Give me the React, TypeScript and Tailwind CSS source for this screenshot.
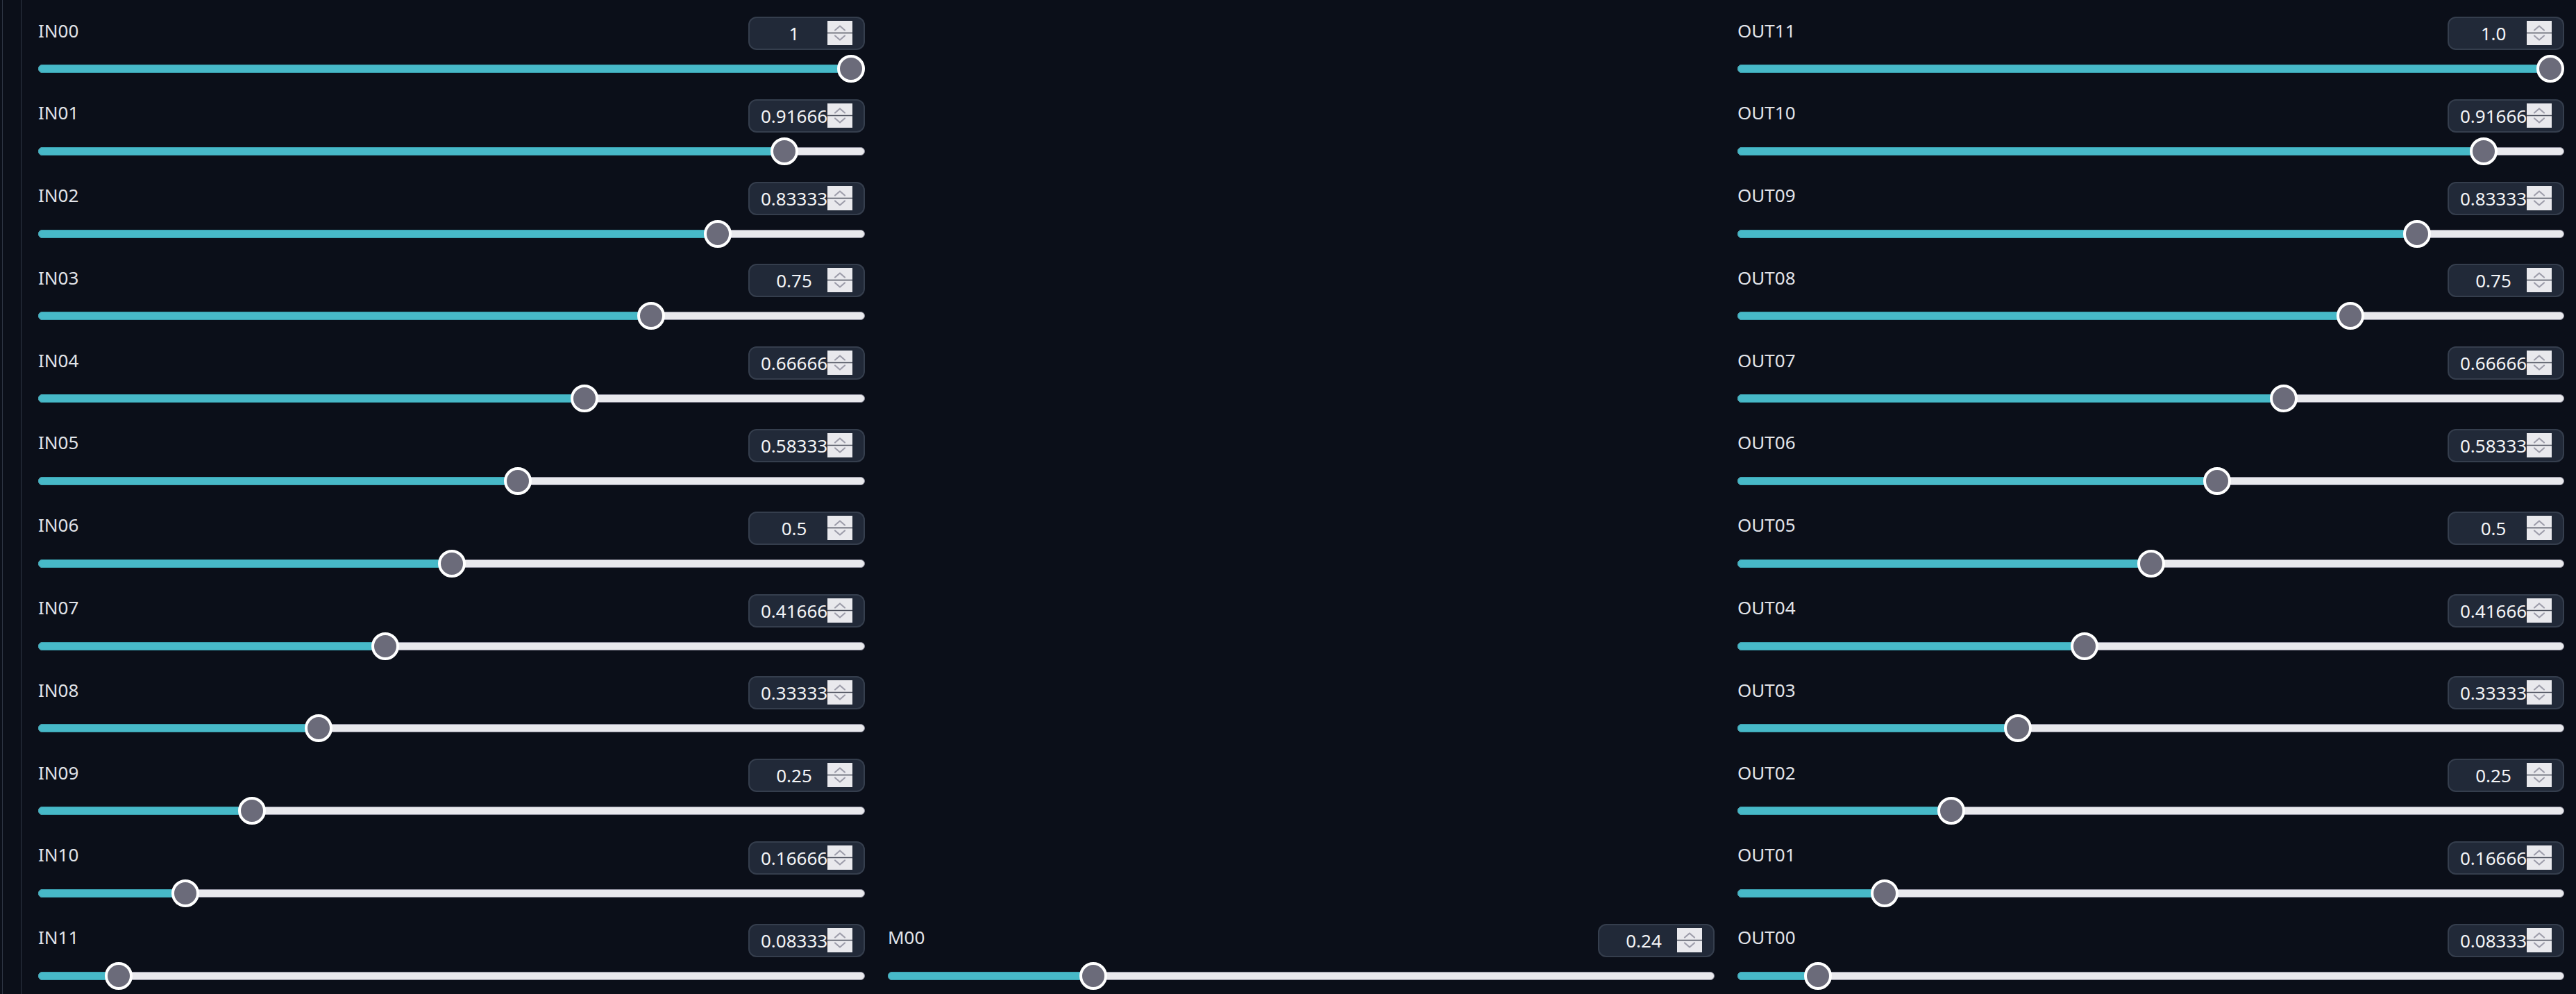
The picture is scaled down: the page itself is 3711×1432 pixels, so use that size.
import React from "react";

type Item = { label: string; value: number; text: string };

const frac = (n: number) => n / 12;

const inItems: Item[] = Array.from({ length: 12 }, (_, i) => {
  const v = frac(12 - i);
  const texts: Record<number, string> = {
    0: "1",
    1: "0.9166666666666666",
    2: "0.8333333333333334",
    3: "0.75",
    4: "0.6666666666666666",
    5: "0.5833333333333334",
    6: "0.5",
    7: "0.4166666666666667",
    8: "0.3333333333333333",
    9: "0.25",
    10: "0.16666666666666666",
    11: "0.08333333333333333",
  };
  return { label: `IN${String(i).padStart(2, "0")}`, value: v, text: texts[i] };
});

const outItems: Item[] = inItems.map((it, i) => ({
  label: `OUT${String(11 - i).padStart(2, "0")}`,
  value: it.value,
  text: i === 0 ? "1.0" : it.text,
}));

function Spinner() {
  return (
    <div className="absolute right-[16px] top-[4px] h-[35px] w-[36px] bg-[#e9e9ed]">
      <svg width="36" height="35" viewBox="0 0 36 35" className="block">
        <line x1="0" y1="17.5" x2="36" y2="17.5" stroke="#4b4f5c" strokeWidth="1.5" />
        <polyline points="11,13.5 18,7.5 25,13.5" fill="none" stroke="#9d9daa" strokeWidth="2.2" strokeLinecap="round" strokeLinejoin="round" />
        <polyline points="11,21.5 18,27.5 25,21.5" fill="none" stroke="#9d9daa" strokeWidth="2.2" strokeLinecap="round" strokeLinejoin="round" />
      </svg>
    </div>
  );
}

function NumberBox({ text }: { text: string }) {
  return (
    <div className="relative h-[48px] w-[168px] rounded-[12px] border-2 border-[#353e4d] bg-[#212938]">
      <div className="absolute left-[16px] top-0 h-full w-[96px] overflow-hidden whitespace-nowrap text-center text-[26px] leading-[44px] text-[#f3f4f6]">
        {text}
      </div>
      <Spinner />
    </div>
  );
}

function Slider({ value }: { value: number }) {
  const left = `calc(${value} * (100% - 40px))`;
  const fill = `calc(20px + ${value} * (100% - 40px))`;
  return (
    <div className="relative h-[40px] w-full">
      <div className="absolute left-0 right-0 top-[14px] h-[12px] rounded-full border border-[#8f8f9d] bg-[#e9e9ed]" />
      <div
        className="absolute left-0 top-[14px] h-[12px] rounded-full border border-[#3a9fae] bg-[#47b9c8]"
        style={{ width: fill }}
      />
      <div
        className="absolute top-0 h-[40px] w-[40px] rounded-full border-[4px] border-white bg-[#6b6b7a]"
        style={{ left }}
      />
    </div>
  );
}

function Row({ item }: { item: Item }) {
  return (
    <div className="flex h-[118.8px] flex-col pt-[24px]">
      <div className="flex h-[48px] items-start justify-between">
        <span className="mt-[6.5px] text-[26px] leading-[26px] text-[#e2e4e9]">{item.label}</span>
        <NumberBox text={item.text} />
      </div>
      <div className="mt-[7px]">
        <Slider value={item.value} />
      </div>
    </div>
  );
}

export default function App() {
  return (
    <div
      className="flex min-h-screen w-full bg-[#0b0f19] pl-[3px]"
      style={{ fontFamily: '"Noto Sans", "Open Sans", sans-serif' }}
    >
      <div className="w-px self-stretch bg-[#2f3644]" />
      <div className="ml-[26px] w-px self-stretch bg-[#2f3644]" />
      <div className="grid flex-1 grid-cols-3 gap-x-[33px] self-start pl-[24px] pr-[17px]">
        <div className="flex flex-col">
          {inItems.map((it) => (
            <Row key={it.label} item={it} />
          ))}
        </div>
        <div className="flex flex-col justify-end">
          <Row item={{ label: "M00", value: 0.24, text: "0.24" }} />
        </div>
        <div className="flex flex-col">
          {outItems.map((it) => (
            <Row key={it.label} item={it} />
          ))}
        </div>
      </div>
    </div>
  );
}
